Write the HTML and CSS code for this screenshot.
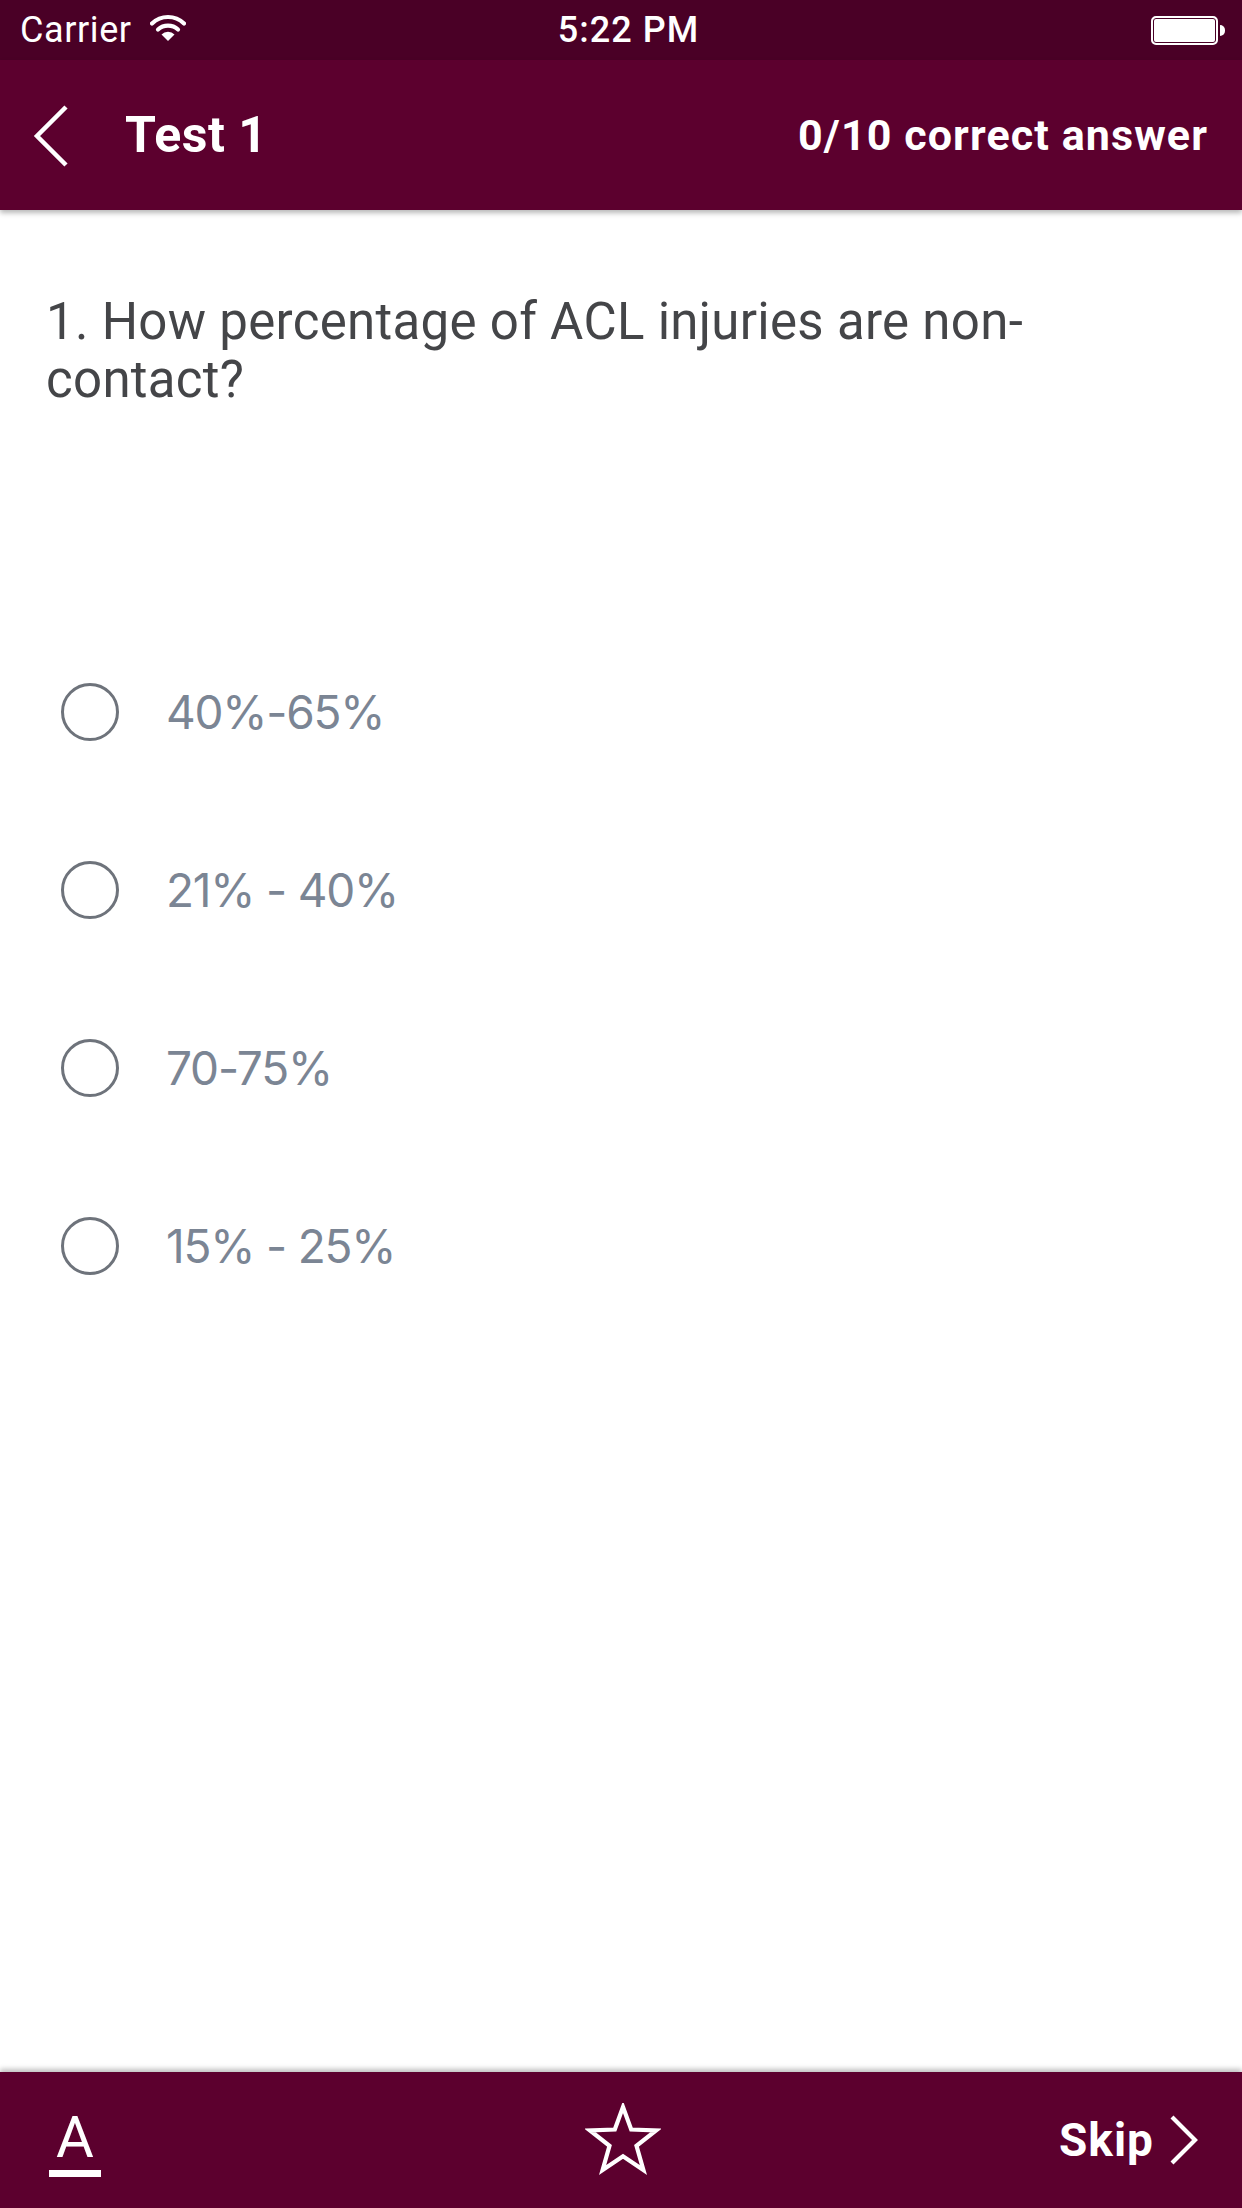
FILE: index.html
```html
<!DOCTYPE html>
<html lang="en">
<head>
<meta charset="utf-8">
<title>Test 1</title>
<link rel="stylesheet" href="styles.css">
</head>
<body>
<div class="screen">
  <header class="status">
    <div class="status-left">
      <span class="carrier">Carrier</span>
      <svg class="wifi" width="36" height="28" viewBox="0 0 36 28">
        <path d="M2 9.5 A23 23 0 0 1 34 9.5" fill="none" stroke="#fff" stroke-width="4.2" stroke-linecap="round"/>
        <path d="M8 15.5 A15 15 0 0 1 28 15.5" fill="none" stroke="#fff" stroke-width="4.2" stroke-linecap="round"/>
        <path d="M18 27 L11.5 20.5 A9 9 0 0 1 24.5 20.5 Z" fill="#fff"/>
      </svg>
    </div>
    <span class="clock">5:22 PM</span>
    <div class="battery"><span class="battery-body"></span><span class="battery-nub"></span></div>
  </header>

  <nav class="navbar">
    <div class="nav-left">
      <svg class="back" width="40" height="64" viewBox="0 0 40 64">
        <path d="M35 3 L6 32 L35 61" fill="none" stroke="#fff" stroke-width="4.5" stroke-linejoin="miter"/>
      </svg>
      <span class="nav-title">Test 1</span>
    </div>
    <span class="score">0/10 correct answer</span>
  </nav>

  <main class="content">
    <h1 class="question">1. How percentage of ACL injuries are non-contact?</h1>
    <ul class="options">
      <li class="option"><span class="radio"></span><span class="option-text">40%-65%</span></li>
      <li class="option"><span class="radio"></span><span class="option-text">21% - 40%</span></li>
      <li class="option"><span class="radio"></span><span class="option-text">70-75%</span></li>
      <li class="option"><span class="radio"></span><span class="option-text">15% - 25%</span></li>
    </ul>
  </main>

  <footer class="toolbar">
    <div class="font-btn"><span class="font-letter">A</span><span class="font-bar"></span></div>
    <svg class="star" width="76" height="74" viewBox="0 0 76 74">
      <path d="M38 4 L46.2 26.5 L71 27.5 L51.5 42.8 L58.4 67 L38 53.2 L17.6 67 L24.5 42.8 L5 27.5 L29.8 26.5 Z" fill="none" stroke="#fff" stroke-width="4.2" stroke-linejoin="miter"/>
    </svg>
    <div class="skip">
      <span class="skip-text">Skip</span>
      <svg class="skip-chev" width="32" height="50" viewBox="0 0 32 50">
        <path d="M4 2 L27 25 L4 48" fill="none" stroke="#fff" stroke-width="4.2"/>
      </svg>
    </div>
  </footer>
</div>
</body>
</html>
```

FILE: styles.css
```css
* { box-sizing: border-box; }

html, body {
  margin: 0;
  padding: 0;
  background: #ffffff;
}

.screen {
  width: 1242px;
  height: 2208px;
  display: flex;
  flex-direction: column;
  font-family: "Roboto", "Liberation Sans", sans-serif;
  overflow: hidden;
}

/* ---------- status bar ---------- */
.status {
  height: 60px;
  flex: none;
  background: #4a0026;
  color: #fff;
  display: grid;
  grid-template-columns: 1fr auto 1fr;
  align-items: center;
  padding: 0 17px 0 20px;
}

.status-left {
  display: flex;
  align-items: center;
  gap: 18px;
}

.carrier {
  font-size: 36px;
  letter-spacing: 0.6px;
}

.wifi { margin-top: -4px; }

.clock {
  font-size: 36px;
  font-weight: 500;
  letter-spacing: 1px;
  margin-left: 12px;
}

.battery {
  display: flex;
  justify-content: flex-end;
  align-items: center;
}

.battery-body {
  width: 67px;
  height: 29px;
  background: #fff;
  border: 2px solid #fff;
  border-radius: 5px;
  box-shadow: 0 0 0 1px #4a0026 inset;
}

.battery-nub {
  width: 5px;
  height: 11px;
  margin-left: 2px;
  background: #fff;
  border-radius: 0 5px 5px 0;
}

/* ---------- navigation bar ---------- */
.navbar {
  height: 150px;
  flex: none;
  background: #5c002e;
  color: #fff;
  display: flex;
  align-items: center;
  justify-content: space-between;
  padding: 0 34px 0 31px;
  box-shadow: 0 3px 5px rgba(0, 0, 0, 0.28);
  position: relative;
  z-index: 2;
}

.nav-left {
  display: flex;
  align-items: center;
  gap: 54px;
}

.back { margin-top: 2px; }

.nav-title {
  font-size: 50px;
  font-weight: 700;
  letter-spacing: 0.5px;
}

.score {
  font-size: 43px;
  font-weight: 700;
  letter-spacing: 1.1px;
}

/* ---------- question ---------- */
.content {
  flex: 1;
  padding: 0 46px;
}

.question {
  margin: 0;
  padding-top: 83px;
  font-size: 51px;
  font-weight: 400;
  line-height: 58px;
  color: #444548;
  letter-spacing: 0.3px;
  width: 1060px;
}

.options {
  list-style: none;
  margin: 214px 0 0;
  padding: 0;
}

.option {
  height: 178px;
  display: flex;
  align-items: center;
  gap: 47px;
  padding-left: 15px;
}

.radio {
  width: 58px;
  height: 58px;
  flex: none;
  border: 3px solid #6e737b;
  border-radius: 50%;
}

.option-text {
  font-family: "Inter", "Roboto", sans-serif;
  font-size: 46px;
  letter-spacing: -1.2px;
  color: #7b8594;
}

/* ---------- bottom toolbar ---------- */
.toolbar {
  height: 136px;
  flex: none;
  background: #5c002e;
  color: #fff;
  display: grid;
  grid-template-columns: 1fr auto 1fr;
  align-items: center;
  padding: 0 42px 0 49px;
  box-shadow: 0 -3px 5px rgba(0, 0, 0, 0.25);
  position: relative;
}

.font-btn {
  display: flex;
  flex-direction: column;
  align-items: center;
  width: 52px;
  margin-top: 8px;
}

.font-letter {
  font-size: 58px;
  font-weight: 400;
  line-height: 50px;
}

.font-bar {
  width: 52px;
  height: 7px;
  background: #fff;
  margin-top: 8px;
}

.star { margin-left: -3px; }

.skip {
  display: flex;
  align-items: center;
  justify-content: flex-end;
  gap: 14px;
}

.skip-text {
  font-size: 46px;
  font-weight: 700;
  letter-spacing: 1px;
}
```
